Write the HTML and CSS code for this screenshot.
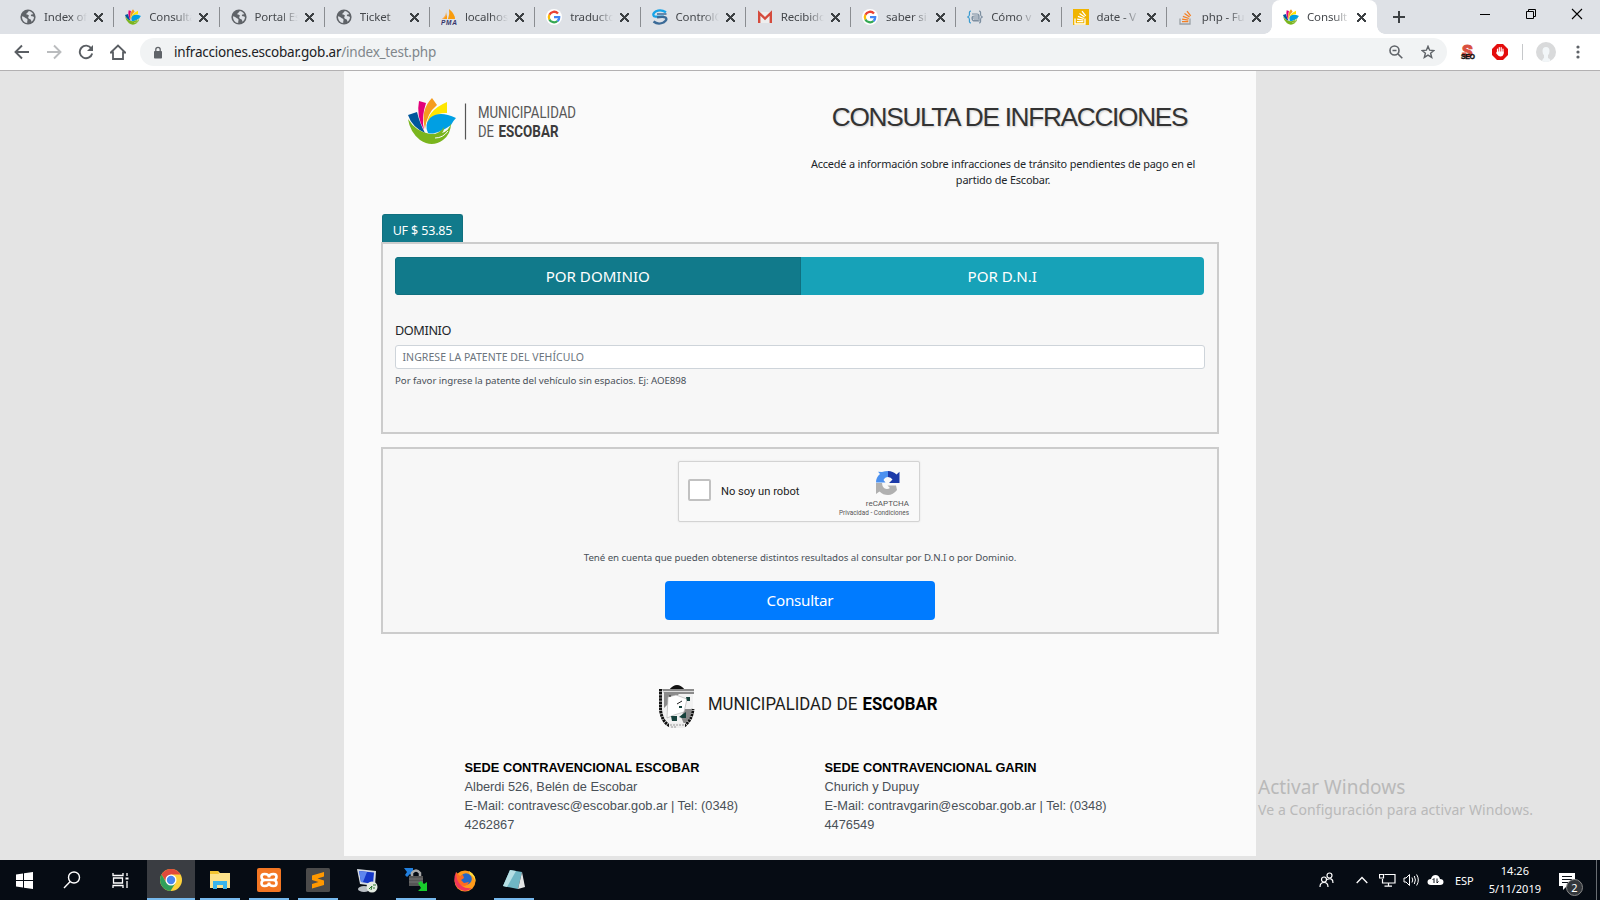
FILE: index.html
```html
<!DOCTYPE html>
<html lang="es">
<head>
<meta charset="utf-8">
<title>Consulta de Infracciones</title>
<link rel="stylesheet" href="styles.css">
</head>
<body>
<svg class="defs" width="0" height="0">
  <symbol id="globe" viewBox="0 0 16 16"><circle cx="8" cy="8" r="7.6" fill="#5f6368"/><path d="M2 7.2c1 .3 2.400 .5 3.200 1.500.8 1 2 .6 2.300 1.800.2 1-.4 1.500-.3 3.500C4 13.800 2 11 2 7.200zM8.800 1.900c1.500.2 3.600 1.500 4.500 3.300-.9.300-1.700-.1-2.300.6-.6.800.3 1.500 1.300 1.500.8 0 1.300.4 1.700.9-.1 1.800-1 3.400-2.400 4.500-.5-.9-.4-2-1.300-2.400-1.200-.4-2.200-.9-2.100-2 .1-.9 1-1.400.5-2C8.200 5.600 7 6 6.400 5.200 5.800 4.200 8.100 3.500 8.800 1.900z" fill="#dee1e6"/></symbol>
  <symbol id="flower" viewBox="0 0 48 46"><path d="M0 17 9 14Q12 26 17 35Q4 29 0 17z" fill="#00579c"/><path d="M11 3 18 5Q13 20 16 32Q8 18 11 3z" fill="#e2007a"/><path d="M24 0 29 7Q19 15 17 31Q12 12 24 0z" fill="#f59c1f"/><path d="M39 4 39 15Q24 14 19 29Q18 13 39 4z" fill="#ffe600"/><path d="M20 35Q16 27 22 20Q31 12 48 20Q45 23 43 27Q35 33 27 35Q23 36 20 35z" fill="#009fe3"/><path d="M0 21Q8 34 22 36Q31 37 36 29Q36 33 34 35Q41 33 43 25Q43 36 35 42Q24 50 12 42Q2 34 0 21z" fill="#7ab51d"/><path d="M27 40Q35 40 40 33" stroke="#fafafa" fill="none"/></symbol>
  <symbol id="google" viewBox="0 0 16 16"><circle cx="8" cy="8" r="8" fill="#fff"/><g fill="none" stroke-width="2.300"><path d="M12 4.500A5.200 5.200 0 0 0 3.400 5.800" stroke="#ea4335"/><path d="M3.400 5.800A5.200 5.200 0 0 0 3.400 10.400" stroke="#fbbc05"/><path d="M3.400 10.400A5.200 5.200 0 0 0 11.500 12" stroke="#34a853"/><path d="M11.500 12Q13.300 10.500 13.200 8.200H8" stroke="#4285f4"/></g></symbol>
  <symbol id="stack" viewBox="0 0 16 16"><path d="M2 9.500V15H12V9.500" fill="none" stroke="var(--tray)" stroke-width="1.300"/><path d="M4 12.700H10.300M4.100 10.100 10.400 11.100M4.900 7.300 10.800 9.500M6.500 4.500 11.600 8M9 2.200 12.700 6.800" stroke="currentColor" stroke-width="1.300"/></symbol>
</svg>

<header class="browser">
  <div class="tabs">
    <div class="tab"><svg class="fav"><use href="#globe"/></svg><span class="name">Index of</span><i class="x"></i></div>
    <div class="tab"><svg class="fav"><use href="#flower"/></svg><span class="name">Consulta</span><i class="x"></i></div>
    <div class="tab"><svg class="fav"><use href="#globe"/></svg><span class="name">Portal Es</span><i class="x"></i></div>
    <div class="tab"><svg class="fav"><use href="#globe"/></svg><span class="name">Ticket</span><i class="x"></i></div>
    <div class="tab"><svg class="fav" viewBox="0 0 16 16"><path d="M5 1Q6 6 1 10H5z" fill="#f9a64a"/><path d="M8 0Q14 5 14 10H7Q9 5 8 0zM6 3 6 10H3Q6 7 6 3z" fill="#f89c0e"/><text x="0" y="15.500" class="pma" textLength="16">PMA</text></svg><span class="name">localhos</span><i class="x"></i></div>
    <div class="tab"><svg class="fav"><use href="#google"/></svg><span class="name">traducto</span><i class="x"></i></div>
    <div class="tab"><svg class="fav" viewBox="0 0 16 16" fill="none" stroke-width="2.300"><path d="M14 3.200Q9 0 4 2.200Q0 4.800 2 7.200Q3.500 8 12 7.600" stroke="#16a3e8"/><path d="M1.500 12.500Q6 16 11.500 13.500Q16 10.500 13.500 8.500Q12 7.500 5 8.300" stroke="#3b6a97"/><path d="M5 5H14.500" stroke="#3b6a97" stroke-width="1.500"/></svg><span class="name">ControlG</span><i class="x"></i></div>
    <div class="tab"><svg class="fav" viewBox="0 0 16 16"><path d="M1 3H15V14H1z" fill="#eee"/><path d="M2.200 14V4L8 9.500 13.800 4V14" fill="none" stroke="#d54b3d" stroke-width="2.400"/></svg><span class="name">Recibido</span><i class="x"></i></div>
    <div class="tab"><svg class="fav"><use href="#google"/></svg><span class="name">saber si</span><i class="x"></i></div>
    <div class="tab"><svg class="fav" viewBox="0 0 16 16" fill="none" stroke="#7c8ea0" stroke-width="1.200"><path d="M4 2Q2 2 2.500 5 2.500 7.500 .8 8 2.500 8.500 2.500 11 2 14 4 14" stroke="#3a9bd0"/><path d="M12 2Q14 2 13.500 5 13.500 7.500 15.200 8 13.500 8.500 13.500 11 14 14 12 14M5 5H10Q12 5 12 7V12H8Q5 12 5 9 5 7 8 7H12M5 9H12M7 11H11"/></svg><span class="name">Cómo v</span><i class="x"></i></div>
    <div class="tab"><svg class="fav so-gold"><use href="#stack"/></svg><span class="name">date - V</span><i class="x"></i></div>
    <div class="tab"><svg class="fav so"><use href="#stack"/></svg><span class="name">php - Fu</span><i class="x"></i></div>
    <div class="tab active"><svg class="fav"><use href="#flower"/></svg><span class="name">Consult</span><i class="x"></i></div>
    <svg class="plus" width="14" height="14"><path d="M7 1V13M1 7H13" stroke="#3c4043" stroke-width="2"/></svg>
    <div class="winctl">
      <svg width="12" height="12"><path d="M1 6.500H11" stroke="#000"/></svg>
      <svg width="12" height="12"><path d="M1.500 3.500H8.500V10.500H1.500zM3.500 3.500V1.500H10.500V8.500H8.500" fill="none" stroke="#000"/></svg>
      <svg width="12" height="12"><path d="M1 1 11 11M11 1 1 11" stroke="#000" stroke-width="1.100"/></svg>
    </div>
  </div>
  <div class="toolbar">
    <svg class="nav" viewBox="0 0 16 16"><path d="M15 8H2M8 1.500 1.500 8 8 14.500" fill="none" stroke="#5a5e63" stroke-width="1.900"/></svg>
    <svg class="nav" viewBox="0 0 16 16"><path d="M1 8H14M8 1.500 14.500 8 8 14.500" fill="none" stroke="#babcbe" stroke-width="1.900"/></svg>
    <svg class="nav" viewBox="0 0 16 16"><path d="M13.300 4.400A6.300 6.300 0 1 0 14.200 9.500" fill="none" stroke="#5a5e63" stroke-width="1.900"/><path d="M15 1V7H9z" fill="#5a5e63"/></svg>
    <svg class="nav" viewBox="0 0 16 16"><path d="M.8 8.500 8 1.500 15.200 8.500H13V15H3V8.500z" fill="none" stroke="#5a5e63" stroke-width="1.800"/></svg>
    <div class="omnibox">
      <svg width="10" height="13"><rect x="1" y="5" width="8" height="7.500" rx=".8" fill="#5f6368"/><path d="M2.800 5V3.500a2.200 2.200 0 0 1 4.400 0V5" fill="none" stroke="#5f6368" stroke-width="1.300"/></svg>
      <span class="url">infracciones.escobar.gob.ar<span class="path">/index_test.php</span></span>
      <svg class="mag" width="14" height="14" fill="none" stroke="#5f6368" stroke-width="1.600"><circle cx="5.500" cy="5.500" r="4.500"/><path d="M9 9 13.300 13.300M3.500 5.500H7.500"/></svg>
      <svg width="14" height="14"><path d="M7 1.300 8.600 5.200 12.900 5.500 9.600 8.200 10.700 12.400 7 10.100 3.300 12.400 4.400 8.200 1.100 5.500 5.400 5.200z" fill="none" stroke="#5f6368" stroke-width="1.400"/></svg>
    </div>
    <div class="exts">
      <svg width="16" height="18"><text x="2" y="14" class="seo-s">S</text><text x="1" y="16" class="seo-t" textLength="14">SEO</text></svg>
      <svg width="16" height="16"><path d="M5 0H11L16 5V11L11 16H5L0 11V5z" fill="#e40d0d"/><path d="M5.500 8V5M7.300 8V3.500M9.200 8V3.500M11 9V5" stroke="#fff" stroke-width="1.200" stroke-linecap="round"/><path d="M5 7.500H11.600V10Q11 12.500 8.500 12.500 6.500 12.500 4 9z" fill="#fff"/></svg>
      <i class="vline"></i>
      <svg width="20" height="20"><circle cx="10" cy="10" r="10" fill="#d9dadb"/><path d="M10 5Q13.500 5 13.500 9 13.500 12 12 13V16Q15 17 14 19Q10 21 6 19 7 16 8 16V13Q6.500 12 6.500 9 6.500 5 10 5z" fill="#f2f6f8"/></svg>
      <svg width="4" height="14" fill="#5f6368"><circle cx="2" cy="2" r="1.600"/><circle cx="2" cy="7" r="1.600"/><circle cx="2" cy="12" r="1.600"/></svg>
    </div>
  </div>
</header>

<main class="page">
  <div class="top">
    <svg class="logo" width="170" height="46"><use href="#flower" width="48" height="46"/><path d="M57.500 5.500V41.500" stroke="#555" stroke-width="1.200"/><text x="70" y="20" class="din" textLength="98" lengthAdjust="spacingAndGlyphs">MUNICIPALIDAD</text><text x="70" y="38.500" class="din" textLength="16" lengthAdjust="spacingAndGlyphs">DE</text><text x="90.500" y="38.500" class="din b" textLength="60" lengthAdjust="spacingAndGlyphs">ESCOBAR</text></svg>
    <div class="intro">
      <h1>CONSULTA DE INFRACCIONES</h1>
      <p>Accedé a información sobre infracciones de tránsito pendientes de pago en el<br>partido de Escobar.</p>
    </div>
  </div>
  <div class="uf">UF $ 53.85</div>
  <section class="box query">
    <div class="switch"><button class="on">POR DOMINIO</button><button>POR D.N.I</button></div>
    <label>DOMINIO</label>
    <div class="input">INGRESE LA PATENTE DEL VEHÍCULO</div>
    <small>Por favor ingrese la patente del vehículo sin espacios. Ej: AOE898</small>
  </section>
  <section class="box send">
    <div class="captcha">
      <i class="check"></i><span class="robot">No soy un robot</span>
      <div class="brand">
        <svg width="24" height="24" viewBox="0 0 24 24"><path d="M12 0V6Q9 6 7.500 9L9.500 11.500H0Q0 6 4 3L2 .8 6 1Q9 0 12 0z" fill="#4a90f0"/><path d="M12 0Q17 0 20.500 3.500L23.500 .8V12H13L16.500 8.500Q15 6 12 6z" fill="#1c3aa9"/><path d="M0 12H6Q6 15 8 17Q11 19 14 17L11.500 14.500 20 14.500 21 19Q17 24 12 24 7 24 3.500 20.500L0 23z" fill="#b0b0b0"/></svg>
        <span class="rc">reCAPTCHA</span><span class="priv">Privacidad - Condiciones</span>
      </div>
    </div>
    <p class="note">Tené en cuenta que pueden obtenerse distintos resultados al consultar por D.N.I o por Dominio.</p>
    <button class="go">Consultar</button>
  </section>
  <svg class="footlogo" width="280" height="46">
    <path d="M10 6Q18 -4 26 6z" fill="#111"/><path d="M1.500 5V26Q3 38 14 43H22Q34 37 34 25V5" fill="#f2f2f2"/><path d="M1.500 5V26Q3 38 11 42M25 42Q33 36 34 25" fill="none" stroke="#111" stroke-width="3" stroke-dasharray="2.500 .6"/><path d="M3 5H35V10H20L12 17 5 24V9z" fill="#8b8b8b"/><path d="M4 7.500H35" stroke="#ddd"/><path d="M26 25H33Q32 35 25 40L22 33z" fill="#888"/><path d="M9 13 17 11 28 15 25 28 15 31 8 34z" fill="#fff" stroke="#aaa" stroke-width=".6"/><path d="M27 13h4v4h-3zM12 32h6v5h-5zM20 33l4-3 3-2v6h-4zM20 22h3v2h-3z" fill="#16423c"/><path d="M10 12h2M18 20l5-3" stroke="#222"/><path d="M10 39H26V44H10z" fill="#eee"/><path d="M11 41H25M12 43H18" stroke="#999" stroke-dasharray="2 1"/>
    <text x="49" y="25.500" class="din k" textLength="124" lengthAdjust="spacingAndGlyphs">MUNICIPALIDAD</text><text x="177.500" y="25.500" class="din k" textLength="21" lengthAdjust="spacingAndGlyphs">DE</text><text x="203.500" y="25.500" class="din k b" textLength="75" lengthAdjust="spacingAndGlyphs">ESCOBAR</text>
  </svg>
  <div class="offices">
    <address><b>SEDE CONTRAVENCIONAL ESCOBAR</b><br>Alberdi 526, Belén de Escobar<br>E-Mail: contravesc@escobar.gob.ar | Tel: (0348)<br>4262867</address>
    <address><b>SEDE CONTRAVENCIONAL GARIN</b><br>Churich y Dupuy<br>E-Mail: contravgarin@escobar.gob.ar | Tel: (0348)<br>4476549</address>
  </div>
</main>
<aside class="activate"><div class="a1">Activar Windows</div><div class="a2">Ve a Configuración para activar Windows.</div></aside>

<footer class="taskbar">
  <div class="slot sys"><svg width="17" height="17" fill="#fff"><path d="M0 2.500 7 1.500V8H0zM8 1.300 17 0V8H8zM0 9H7V15.500L0 14.500zM8 9H17V17L8 15.700z"/></svg></div>
  <div class="slot sys"><svg width="18" height="18" fill="none" stroke="#fff" stroke-width="1.400"><circle cx="11" cy="6.500" r="5.500"/><path d="M7.200 10.500 1 17"/></svg></div>
  <div class="slot sys"><svg width="17" height="17" fill="none" stroke="#fff" stroke-width="1.300"><path d="M1 1V3.500H11V1M1 16V13.500H11V16M1.500 6H10.500V11H1.500zM15 1V4M15 9V16"/><path d="M13.500 5.500h3v2h-3z" fill="#fff" stroke="none"/></svg></div>
  <div class="slot sys cur"><svg width="22" height="22" viewBox="0 0 22 22"><circle cx="11" cy="11" r="11" fill="#fdd23c"/><path d="M1.500 5.500A11 11 0 0 1 20.500 5.500H11L6.500 13.500z" fill="#e14a3b"/><path d="M1.500 5.500 6.500 14 11 16 15.500 14 10.500 22A11 11 0 0 1 1.500 5.500z" fill="#2f9f5a"/><circle cx="11" cy="11" r="5.500" fill="#fff"/><circle cx="11" cy="11" r="4.200" fill="#4a86ee"/></svg></div>
  <div class="slot run"><svg width="22" height="20"><path d="M1 1H9L11 3H21V18H1z" fill="#fde28a"/><path d="M1 1H9L10 4H1z" fill="#f3c431"/><path d="M4 19V11H18V19H14V15H8V19z" fill="#39b4ea"/></svg></div>
  <div class="slot run"><svg width="24" height="24"><rect width="24" height="24" rx="2" fill="#f37623"/><path d="M7.500 6Q12 6 12 9.500 12 6 16.500 6 19.500 6 19.500 8.800 19.500 12 16 12 19.500 12 19.500 15.200 19.500 18 16.500 18 12 18 12 14.500 12 18 7.500 18 4.500 18 4.500 15.200 4.500 12 8 12 4.500 12 4.500 8.800 4.500 6 7.500 6zM8 12H16" fill="none" stroke="#fff" stroke-width="2.600"/></svg></div>
  <div class="slot run"><svg width="24" height="24"><rect width="24" height="24" rx="1.500" fill="#4b4b4b"/><path d="M18 4V8.500L11.500 10.500 18 12.500V17L6 20.500V16L12.500 14 6 12V7.500z" fill="#ff9800"/></svg></div>
  <div class="slot"><svg width="24" height="25"><path d="M2 1 21 3 20 18 5 16z" fill="#d5dbe3"/><path d="M4 3 19 4.500 18 16 6 14z" fill="#1538c8"/><path d="M4 3 12 4 8 14 6 14z" fill="#5d86ee"/><ellipse cx="9" cy="21" rx="6" ry="3" fill="#b9bfc4"/><circle cx="17" cy="19" r="5.500" fill="#e4ebe2"/><path d="M14 21 17 18 16 22M18 17H21M18 20H20" stroke="#2c7a2c" fill="none"/></svg></div>
  <div class="slot run lock"><svg width="24" height="25"><path d="M0 1H9V9L6 7 3 10 1 8 3 5z" fill="#2180df"/><path d="M8 11V6Q12 1 16 6V11" fill="none" stroke="#aaa" stroke-width="2.500"/><rect x="5" y="9" width="14" height="10" fill="#555"/><path d="M5 12H19M5 15H19" stroke="#777"/><path d="M14 16 17 14 20 17 23 15V24H14L17 21z" fill="#18cc2c"/></svg></div>
  <div class="slot"><svg width="22" height="23"><circle cx="11" cy="12" r="10.500" fill="#ff9b1a"/><path d="M2 3Q-2 12 4 19 11 25 18 19 12 20 8 17 4 13 6 9z" fill="#f0375a"/><path d="M15 2Q22 6 21.500 13 20 7 16 6z" fill="#ffdc3e"/><circle cx="12" cy="10" r="5.800" fill="#2468c8"/><path d="M2 3 6 7 9 6 10 9 7 11 10 14 15 13Q12 19 7 16 2 12 2 3z" fill="#ff6a21"/></svg></div>
  <div class="slot run"><svg width="24" height="24"><path d="M8 2 20 4 16 21 1 18z" fill="#6fb6c4"/><path d="M8 2 14 3 5 19 1 18z" fill="#b5dfe4"/><path d="M20 4 23 19 16 21z" fill="#e3e6e6"/></svg></div>
  <div class="tray">
    <svg class="people" width="15" height="16" fill="none" stroke="#fff" stroke-width="1.200"><circle cx="10.500" cy="3.500" r="2.500"/><circle cx="5" cy="7.500" r="2.500"/><path d="M1 15Q1 10.500 5 10.500T9 15M8 7.500Q14 5 14 11"/></svg>
    <svg class="chev" width="12" height="8"><path d="M.7 7 6 1.500 11.300 7" fill="none" stroke="#fff" stroke-width="1.300"/></svg>
    <svg class="net" width="17" height="14" fill="none" stroke="#fff"><path d="M5.500 1.500H16V10H3.500V6M.5 1.500H4.500V5H.5zM9.500 10V13M5.500 13.200H13" stroke-width="1.200"/></svg>
    <svg class="vol" width="17" height="14" fill="none" stroke="#fff"><path d="M1 5H3L6.500 1.500V12.500L3 9H1zM9 4.500Q10.500 7 9 9.500M11.300 3Q13.500 7 11.300 11M13.600 1.500Q17 7 13.600 12.500"/></svg>
    <svg class="cloud" width="17" height="12"><path d="M4 11Q.5 11 .5 8T4 5Q5 1 8.500 1T13 5Q16.500 5 16.500 8T13 11z" fill="#fff"/><path d="M7 9V4.500L5.500 6M10 4.500V9L11.500 7.500" fill="none" stroke="#0a1018"/></svg>
    <span class="lang">ESP</span>
    <div class="clock"><span>14:26</span><span>5/11/2019</span></div>
    <svg class="notif" width="26" height="26"><path d="M1 3H17V16H9L5 20V16H1z" fill="#fff"/><path d="M4 6.500H14M4 9.500H14M4 12.500H10" stroke="#0a1018" stroke-width="1.200"/><circle cx="16.500" cy="17.500" r="8" fill="#33373b" stroke="#888"/><text x="16.500" y="21.500" class="cnt">2</text></svg>
    <i class="peek"></i>
  </div>
</footer>
</body>
</html>
```
FILE: styles.css
```css
* { box-sizing: border-box; }
body { margin: 0; width: 1600px; height: 900px; overflow: hidden; display: flex; flex-direction: column; background: #e4e4e4; font-family: "Noto Sans", "Open Sans", sans-serif; position: relative; }
.defs { position: absolute; }
svg { display: block; flex: none; }
button { font-family: inherit; border: 0; padding: 0; }

.browser { height: 71px; flex: none; border-bottom: 1px solid #b3b1b2; background: #fff; }
.tabs { height: 34px; background: #dee1e6; display: flex; align-items: center; padding-left: 9px; }
.tab { width: 105.250px; height: 34px; flex: none; display: flex; align-items: center; padding-left: 11px; background: linear-gradient(#8a8d91, #8a8d91) right 0 top 7px / 1px 20px no-repeat; }
.tab:nth-child(12) { background: none; }
.tab.active { background: #fff; border-radius: 8px 8px 0 0; position: relative; }
.tab.active::before, .tab.active::after { content: ""; position: absolute; bottom: 0; width: 8px; height: 8px; left: -8px; background: radial-gradient(circle at 0 0, transparent 7.500px, #fff 8px); }
.tab.active::after { left: auto; right: -8px; background: radial-gradient(circle at 100% 0, transparent 7.500px, #fff 8px); }
.fav { width: 16px; height: 16px; }
.name { width: 43px; margin: 0 7px 0 8px; overflow: hidden; white-space: nowrap; font-size: 11.500px; letter-spacing: -.15px; line-height: 20px; color: #45484c; -webkit-mask-image: linear-gradient(90deg, #000 26px, transparent 43px); mask-image: linear-gradient(90deg, #000 26px, transparent 43px); }
.x { width: 9px; height: 9px; background: linear-gradient(45deg, transparent 44%, #3c4043 44%, #3c4043 56%, transparent 56%), linear-gradient(-45deg, transparent 44%, #3c4043 44%, #3c4043 56%, transparent 56%); }
.pma { font: italic bold 6.500px "Liberation Sans", sans-serif; fill: #34346a; }
.so { color: #f48024; --tray: #9aa0a6; }
.so-gold { color: #fff; --tray: #fff; background: #f0b400; }
.plus { margin-left: 15px; }
.winctl { margin-left: auto; margin-right: 17px; display: flex; gap: 34px; margin-bottom: 6px; }
.toolbar { height: 36px; display: flex; align-items: center; padding: 0 20px 0 14px; }
.nav { width: 16px; height: 16px; flex: none; margin-right: 16px; }
.omnibox { width: 1307px; height: 28px; flex: none; margin-left: -2px; border-radius: 14px; background: #f1f3f4; display: flex; align-items: center; padding: 0 12px 0 13px; }
.url { margin-left: 11px; font-size: 13.500px; letter-spacing: -.22px; line-height: 20px; color: #202124; }
.path { color: #80868b; }
.mag { margin-left: auto; margin-right: 18px; }
.exts { margin-left: auto; display: flex; align-items: center; }
.exts > * { margin-left: 16px; }
.exts > svg:first-child { margin-left: 0; }
.vline { width: 1px; height: 16px; background: #c6c8ca; }
.exts .vline { margin-left: 14px; }
.exts .vline + svg { margin-left: 13px; }
.exts > svg:last-child { margin-left: 20px; }
.seo-s { font: 900 17px Roboto, sans-serif; fill: #d9503f; stroke: #d9503f; }
.seo-t { font: bold 7px "Liberation Sans", sans-serif; fill: #111; stroke: #111; stroke-width: .4px; }

.page { width: 912px; height: 785px; flex: none; margin-left: 344px; padding: 0 37px; background: #fafafa; color: #212529; }
.top { height: 143px; display: flex; padding: 27px 0 0 27px; }
.din { font: 16.500px Roboto, sans-serif; fill: #575656; }
.din.b { font-weight: 700; fill: #3c3b3b; }
.din.k { font-size: 17.500px; fill: #1d1d1b; }
.din.k.b { fill: #000; }
.intro { width: 410px; margin-left: 220px; text-align: center; }
h1 { margin: 4px 0 0 13px; font: 26.250px/30px "Liberation Sans", Arial, sans-serif; letter-spacing: -1.320px; color: #333; text-shadow: 1px 1px 2px #ccc; white-space: nowrap; }
.intro p { margin: 24px 0 0; font-size: 10.900px; letter-spacing: -.165px; line-height: 16px; white-space: nowrap; }
.uf { width: 81px; height: 28px; margin-left: 1px; border: 1px solid #10707f; border-bottom: 0; border-radius: 3px 3px 0 0; background: #117a8b; color: #fff; font-size: 12.500px; letter-spacing: -.15px; line-height: 31px; text-align: center; }
.box { border: 2px solid #ccc; background: #f7f7f7; }
.query { height: 192px; padding: 13px 12px; }
.switch { height: 38px; display: flex; border-radius: 4px; overflow: hidden; margin-right: 1px; }
.switch button { flex: 1; background: #17a2b8; color: #fff; font-size: 15.100px; }
.switch .on { background: #117a8b; border: 1px solid #10707f; }
label { display: block; margin-top: 25px; height: 25px; font-size: 12.700px; letter-spacing: -.4px; line-height: 20px; }
.input { height: 24px; border: 1px solid #ced4da; border-radius: 3px; background: #fff; padding-left: 6.500px; font-size: 10.500px; letter-spacing: .06px; line-height: 23px; color: #6c757d; }
small { display: block; margin-top: 4px; font-size: 9.700px; letter-spacing: -.045px; line-height: 16px; color: #495057; }
.send { height: 187px; margin-top: 13px; padding-top: 12px; display: flex; flex-direction: column; align-items: center; }
.captcha { width: 242px; height: 61px; margin-right: 2px; border: 1px solid #d3d3d3; border-radius: 2px; background: #f9f9f9; box-shadow: 0 0 2px rgba(0,0,0,.1); display: flex; padding: 0 10px 0 9px; font-family: Roboto, sans-serif; }
.check { width: 23px; height: 22px; margin-top: 17px; border: 2px solid #c1c1c1; border-radius: 2px; background: #fff; }
.robot { margin: 22px 0 0 10px; font-size: 11.150px; line-height: 16px; color: #222; }
.brand { margin-left: auto; display: flex; flex-direction: column; align-items: flex-end; padding-top: 9px; color: #555; }
.brand svg { margin-right: 9px; }
.rc { margin-top: 4px; font-size: 8px; line-height: 10px; }
.priv { font-size: 6.400px; line-height: 8px; }
.note { margin: 28px 0 0; font-size: 9.700px; letter-spacing: -.045px; line-height: 16px; color: #495057; }
.go { width: 270px; height: 39px; margin-top: 15px; padding-bottom: 1px; border-radius: 4px; background: #007bff; color: #fff; font-size: 15.200px; letter-spacing: -.25px; }
.footlogo { margin: 50px 0 0 278px; }
.offices { display: flex; margin: 28px 0 0 83.500px; font: 12.800px/19px "Liberation Sans", Arial, sans-serif; color: #495057; }
address { width: 360px; font-style: normal; }
address b { color: #000; }
.activate { position: absolute; left: 1258px; top: 774px; color: #b9b9b9; white-space: nowrap; }
.a1 { font-size: 19px; line-height: 26px; }
.a2 { font-size: 14px; letter-spacing: .08px; line-height: 20px; }

.taskbar { margin-top: auto; height: 40px; background: #060c14; display: flex; color: #fff; }
.slot { width: 49px; height: 40px; flex: none; display: flex; align-items: center; justify-content: center; background: linear-gradient(#76b9ed, #76b9ed) center bottom / 0 2px no-repeat; }
.slot.sys { width: 48px; }
.slot.run { background-size: 40px 2px; }
.slot.cur { margin-left: 3px; background-color: #3a3d42; background-size: 100% 2px; }
.lock svg { margin-top: -2px; }
.tray { margin-left: auto; display: flex; align-items: center; }
.chev { margin-left: 22px; }
.net { margin-left: 11px; }
.vol { margin-left: 7px; }
.cloud { margin-left: 7px; }
.lang { margin-left: 11px; font-size: 11px; }
.clock { margin-left: 15px; display: flex; flex-direction: column; align-items: center; font-size: 11px; line-height: 18px; }
.notif { margin-left: 17px; margin-top: 6px; }
.cnt { font: 11px "Noto Sans", sans-serif; fill: #fff; text-anchor: middle; }
.peek { width: 1px; height: 40px; margin: 0 3px 0 12px; background: #686d72; }
```
